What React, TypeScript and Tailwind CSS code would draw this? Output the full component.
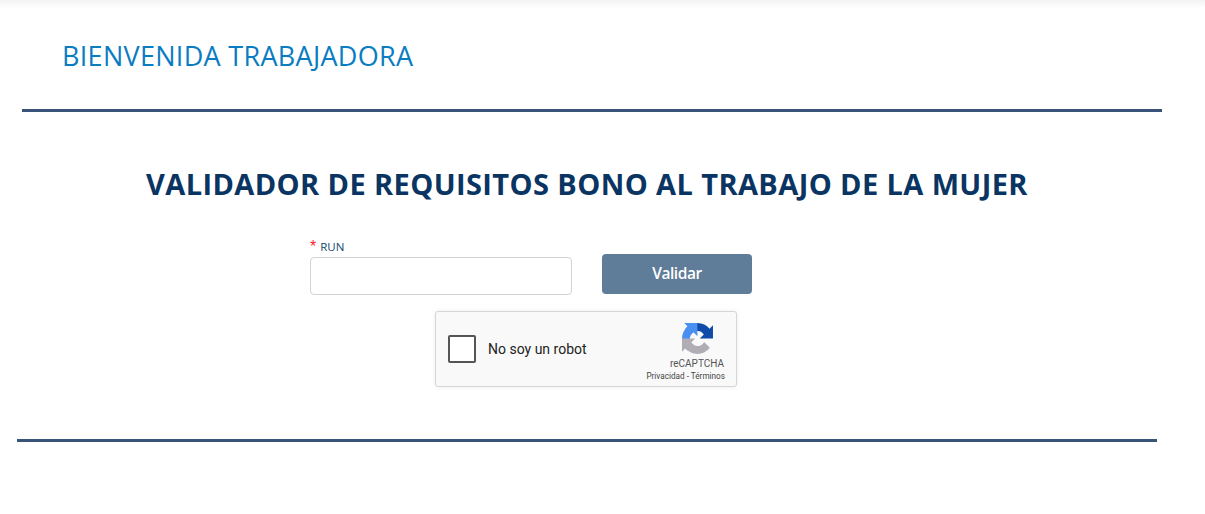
import React from "react";

function RecaptchaLogo() {
  return (
    <svg width="31" height="31" viewBox="0 0 64 64" className="block mr-[12px]">
      <path d="M64 31.955l-.033-1.37V4.687l-7.16 7.16C50.948 4.674 42.033.093 32.05.093c-10.4 0-19.622 4.96-25.458 12.64l11.736 11.86a15.55 15.55 0 0 1 4.754-5.334c2.05-1.6 4.952-2.906 8.968-2.906.485 0 .86.057 1.135.163 4.976.393 9.288 3.14 11.828 7.124l-8.307 8.307c10.522-.04 22.4-.066 27.295 0" fill="#0f4ba8" />
      <path d="M31.862.001l-1.37.033H4.594l7.16 7.16C4.58 13.053 0 21.968 0 31.95c0 10.4 4.96 19.622 12.64 25.458L24.5 45.672a15.55 15.55 0 0 1-5.334-4.754c-1.6-2.05-2.906-4.952-2.906-8.968 0-.485.057-.86.163-1.135.393-4.976 3.14-9.288 7.124-11.828l8.307 8.307c-.04-10.522-.066-22.4 0-27.295" fill="#4a90f0" />
      <path d="M.001 32.045l.033 1.37v25.898l7.16-7.16c5.858 7.173 14.773 11.754 24.755 11.754 10.4 0 19.622-4.96 25.458-12.64l-11.736-11.86a15.55 15.55 0 0 1-4.754 5.334c-2.05 1.6-4.952 2.906-8.968 2.906-.485 0-.86-.057-1.135-.163-4.976-.393-9.288-3.14-11.828-7.124l8.307-8.307c-10.522.04-22.4.066-27.295 0" fill="#b0aeb4" />
    </svg>
  );
}

export default function App() {
  return (
    <div className="h-[514px] w-[1205px] overflow-hidden bg-white font-['Open_Sans','Noto_Sans',sans-serif]">
      <div className="h-2 bg-gradient-to-b from-[#f3f3f3] to-white" />
      <div className="pl-[62px] pt-[30px] h-[101px] text-[27px] leading-[36px] text-[#0a7cc2] tracking-[0.3px] whitespace-nowrap">
        BIENVENIDA TRABAJADORA
      </div>
      <div className="ml-[22px] w-[1140px] h-[3px] bg-[#3a5378]" />
      <h1 className="ml-[146px] mt-[52px] text-[29px] leading-[40px] font-bold text-[#0a3563] tracking-[0.4px] whitespace-nowrap">
        VALIDADOR DE REQUISITOS BONO AL TRABAJO DE LA MUJER
      </h1>
      <div className="ml-[310px] mt-[33px] flex items-end">
        <div className="w-[262px]">
          <div className="flex items-center h-[18px] pt-[1px] text-[11.5px] text-[#10466f] mb-[2px]">
            <span className="text-[#f5222d] text-[16px] mr-[4px] font-['Liberation_Sans',sans-serif]">*</span>
            <span>RUN</span>
          </div>
          <input className="block w-[262px] h-[38px] border border-[#d0d3d8] rounded-[4px] bg-white" />
        </div>
        <button className="ml-[30px] mb-[1px] w-[150px] h-[40px] rounded-[4px] bg-[#5f7c98] text-white text-[15.5px] font-semibold tracking-[-0.45px]">
          Validar
        </button>
      </div>
      <div className="ml-[435px] mt-[16px] w-[302px] h-[76px] flex border border-[#d6d6d6] rounded-[3px] bg-[#f9f9f9] shadow-[0_0_4px_rgba(0,0,0,0.08)] font-['Roboto',sans-serif]">
        <div className="ml-[12px] mt-[23px] w-[28px] h-[28px] border-2 border-[#555555] rounded-[2px] bg-white" />
        <div className="ml-[12px] mt-[27px] h-[20px] text-[14px] leading-[20px] text-[#222222]">No soy un robot</div>
        <div className="ml-auto flex flex-col items-end pt-[11px] pr-[11px]">
          <RecaptchaLogo />
          <div className="mt-[4px] mr-[1px] text-[10px] leading-[12px] text-[#555555]">reCAPTCHA</div>
          <div className="mt-[0px] text-[8.2px] leading-[12px] text-[#444444] whitespace-nowrap">Privacidad - Términos</div>
        </div>
      </div>
      <div className="ml-[17px] mt-[52px] w-[1140px] h-[3px] bg-[#3a5378]" />
    </div>
  );
}
